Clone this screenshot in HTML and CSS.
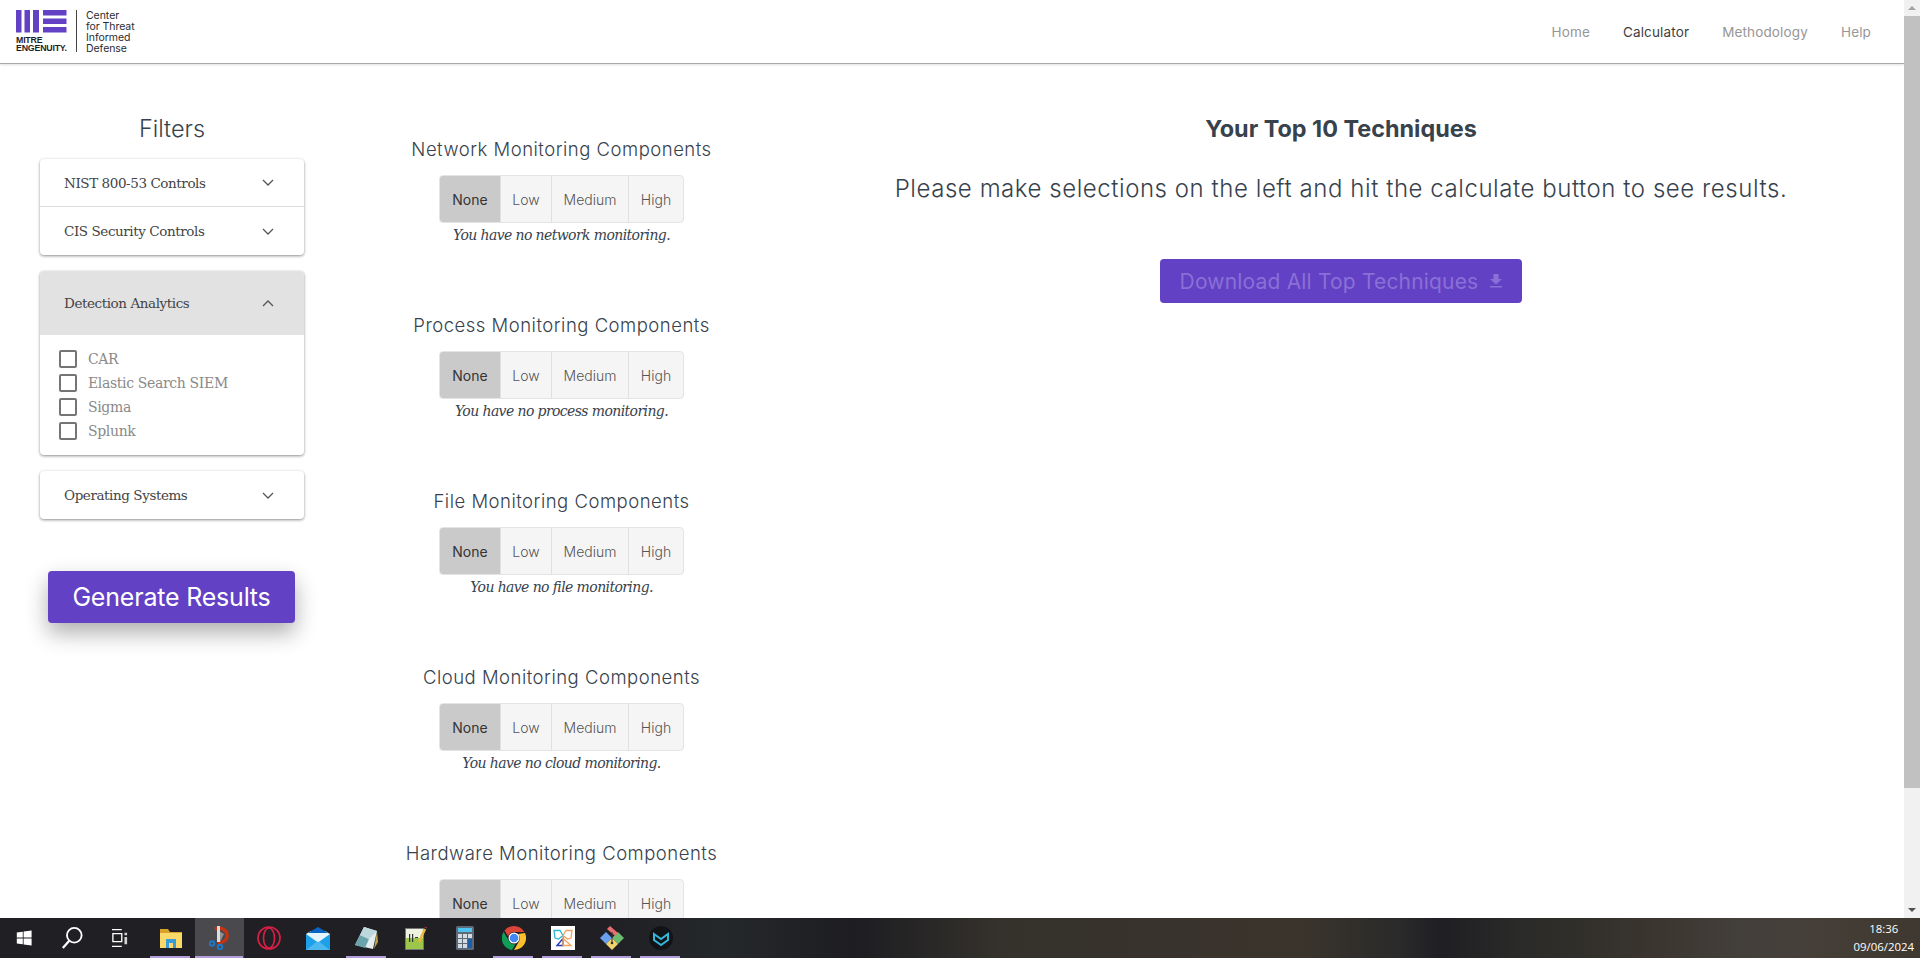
FILE: index.html
```html
<!DOCTYPE html>
<html lang="en">
<head>
<meta charset="utf-8">
<title>Top ATT&amp;CK Techniques</title>
<link rel="stylesheet" href="styles.css">
</head>
<body>
<div class="screen">
  <div class="browser">
    <div class="page">
      <header class="topbar">
        <div class="brand">
          <div class="brand-mark">
            <svg class="brand-bars" width="24" height="23" viewBox="0 0 24 23"><path fill="#6341c4" d="M0 0h5.500v22.500H0zM8.500 0h5.500v22.500H8.500zM17 0h6v22.500h-6z"/></svg>
            <svg class="brand-bars" width="24" height="23" viewBox="0 0 24 23"><path fill="#6341c4" d="M0 0h23.500v5.500H0zM0 8.500h23.500V14H0zM0 17h23.500v5.500H0z"/></svg>
            <div class="brand-name">MITRE<br>ENGENUITY.</div>
          </div>
          <div class="brand-title">Center<br>for Threat<br>Informed<br>Defense</div>
        </div>
        <nav class="nav">
          <a class="nav-link">Home</a>
          <a class="nav-link nav-active">Calculator</a>
          <a class="nav-link">Methodology</a>
          <a class="nav-link">Help</a>
        </nav>
      </header>
      <main class="content">
        <section class="filters">
          <h2 class="filters-title">Filters</h2>
          <div class="card">
            <div class="acc-row acc-divider"><span>NIST 800-53 Controls</span><svg class="chev" viewBox="0 0 12 7"><path d="M1 1l5 5 5-5"/></svg></div>
            <div class="acc-row"><span>CIS Security Controls</span><svg class="chev" viewBox="0 0 12 7"><path d="M1 1l5 5 5-5"/></svg></div>
          </div>
          <div class="card">
            <div class="acc-row acc-open"><span>Detection Analytics</span><svg class="chev" viewBox="0 0 12 7"><path d="M1 6l5-5 5 5"/></svg></div>
            <div class="acc-body">
              <label class="check"><i class="box"></i>CAR</label>
              <label class="check"><i class="box"></i>Elastic Search SIEM</label>
              <label class="check"><i class="box"></i>Sigma</label>
              <label class="check"><i class="box"></i>Splunk</label>
            </div>
          </div>
          <div class="card">
            <div class="acc-row"><span>Operating Systems</span><svg class="chev" viewBox="0 0 12 7"><path d="M1 1l5 5 5-5"/></svg></div>
          </div>
          <button class="generate">Generate Results</button>
        </section>
        <section class="monitors">
          <div class="monitor">
            <h3 class="monitor-title">Network Monitoring Components</h3>
            <div class="levels"><span class="level level-on">None</span><span class="level">Low</span><span class="level">Medium</span><span class="level">High</span></div>
            <p class="monitor-note">You have no network monitoring.</p>
          </div>
          <div class="monitor">
            <h3 class="monitor-title">Process Monitoring Components</h3>
            <div class="levels"><span class="level level-on">None</span><span class="level">Low</span><span class="level">Medium</span><span class="level">High</span></div>
            <p class="monitor-note">You have no process monitoring.</p>
          </div>
          <div class="monitor">
            <h3 class="monitor-title">File Monitoring Components</h3>
            <div class="levels"><span class="level level-on">None</span><span class="level">Low</span><span class="level">Medium</span><span class="level">High</span></div>
            <p class="monitor-note">You have no file monitoring.</p>
          </div>
          <div class="monitor">
            <h3 class="monitor-title">Cloud Monitoring Components</h3>
            <div class="levels"><span class="level level-on">None</span><span class="level">Low</span><span class="level">Medium</span><span class="level">High</span></div>
            <p class="monitor-note">You have no cloud monitoring.</p>
          </div>
          <div class="monitor">
            <h3 class="monitor-title">Hardware Monitoring Components</h3>
            <div class="levels"><span class="level level-on">None</span><span class="level">Low</span><span class="level">Medium</span><span class="level">High</span></div>
          </div>
        </section>
        <section class="results">
          <h2 class="results-title">Your Top 10 Techniques</h2>
          <p class="results-msg">Please make selections on the left and hit the calculate button to see results.</p>
          <button class="download">Download All Top Techniques
            <svg class="download-icon" width="12" height="14" viewBox="0 0 12 14"><path d="M3.500 0h5v5H12L6 10.500 0 5h3.500zM0 12h12v1.500H0z"/></svg>
          </button>
        </section>
      </main>
    </div>
    <div class="scrollbar">
      <div class="scroll-btn"><i class="tri-up"></i></div>
      <div class="scroll-track"><div class="scroll-thumb"></div></div>
      <div class="scroll-btn"><i class="tri-down"></i></div>
    </div>
  </div>
  <footer class="taskbar">
    <div class="task-item task-sys">
      <svg width="16" height="16" viewBox="0 0 20 20"><path fill="#fff" d="M1 3.200l7.500-1v7.300H1zM9.500 2l10-1.500v9h-10zM1 10.500h7.500v7.300l-7.500-1zM9.500 10.500h10v9l-10-1.500z"/></svg>
    </div>
    <div class="task-item task-sys">
      <svg width="22" height="24" viewBox="0 0 24 26"><circle cx="14.500" cy="10" r="8" fill="none" stroke="#fff" stroke-width="2"/><path d="M9 16L2 24" stroke="#fff" stroke-width="2.500" fill="none"/></svg>
    </div>
    <div class="task-item task-sys">
      <svg width="16" height="20" viewBox="0 0 18 22"><path d="M0 1.500h11M0 20.500h11M1 6h10v9H1z" stroke="#fff" stroke-width="1.500" fill="none"/><path d="M14 5h3v3h-3zM14 10h3v8h-3z" fill="#fff" opacity=".8"/></svg>
    </div>
    <div class="task-item task-app task-first task-open">
      <svg width="22" height="19" viewBox="0 0 22 19"><path fill="#d9a22b" d="M0 0h8l2 3h12v6H0z"/><path fill="#fbd968" d="M0 4h22v15H0z"/><path fill="#3a9bd9" d="M6 10h10v9h-3v-5H9v5H6z"/></svg>
    </div>
    <div class="task-item task-app task-active">
      <svg class="snip-icon" width="20" height="24" viewBox="0 0 20 24"><path fill="none" stroke="#c8320f" stroke-width="3.200" d="M6 3c7-3 13 2 12 8-1 4-5 6-9 6"/><path fill="#8f8f92" d="M10 5l5 3-4 8z"/><path fill="#dcdde0" d="M8 0h3v16H8z"/><circle cx="3" cy="17.500" r="2.300" fill="none" stroke="#1d78c8" stroke-width="1.900"/><circle cx="11" cy="21" r="2.300" fill="none" stroke="#1d78c8" stroke-width="1.900"/></svg>
    </div>
    <div class="task-item task-app">
      <svg width="24" height="24" viewBox="0 0 24 24"><circle cx="12" cy="12" r="11" fill="none" stroke="#d61f45" stroke-width="1.700"/><ellipse cx="12" cy="12" rx="5.500" ry="10" fill="none" stroke="#d61f45" stroke-width="1.700"/></svg>
    </div>
    <div class="task-item task-app">
      <svg width="24" height="23" viewBox="0 0 24 23"><path fill="#1ca0ea" d="M0 7h24v16H0z"/><path fill="#e6f5fd" d="M0 7l12 8.500L24 7l-5-3H5z"/><path fill="#0a64c2" d="M12 0L2 6h20z"/><path fill="#4bb8f0" d="M0 23l11-8.500 1 .5 1-.5L24 23z"/></svg>
    </div>
    <div class="task-item task-app task-open">
      <svg width="23" height="22" viewBox="0 0 23 22"><path fill="#b9a04a" d="M22 4l1 11-4 7z"/><path fill="#e3ecee" d="M9 0l13 4-4 18L0 18z"/><path fill="#6ba3ad" d="M0 18L5 8l9 4-4 9z"/><path fill="#bcd8dd" d="M5 8l4-8 13 4-8 8z"/></svg>
    </div>
    <div class="task-item task-app">
      <svg width="22" height="24" viewBox="0 0 22 24"><path fill="#eef3e0" stroke="#777" d="M.5 2.500h18v21H.5z"/><path fill="#9dc74a" d="M1 12h17v11H1z"/><path fill="#333" d="M4 8h1.200v8H4zM7 8h1.200v8H7zM10 11h3v1h-3z"/><path stroke="#e8b93a" stroke-width="2.500" d="M20 3l-6 13" fill="none"/><path stroke="#b03030" stroke-width="2.500" d="M20.500 2l.5-1" fill="none"/></svg>
    </div>
    <div class="task-item task-app">
      <svg width="18" height="24" viewBox="0 0 18 24"><rect width="18" height="24" rx="1.500" fill="#5d6a78"/><path fill="#4fc3f0" d="M2 2h14v4H2z"/><path fill="#d5dbe0" d="M2 8h4v4H2zM7 8h4v4H7zM12 8h4v4h-4zM2 13h4v4H2zM7 13h4v4H7zM2 18h4v4H2zM7 18h4v4H7z"/><path fill="#1a5fa8" d="M12 13h4v9h-4z"/></svg>
    </div>
    <div class="task-item task-app task-open">
      <svg width="24" height="24" viewBox="0 0 24 24"><path fill="#db4437" d="M12 0a12 12 0 0 1 10.400 6H12a6 6 0 0 0-5.800 4.500L2.500 4.500A12 12 0 0 1 12 0z"/><path fill="#0f9d58" d="M1.600 5.800l5.200 9A6 6 0 0 0 13.500 18L10 24A12 12 0 0 1 1.600 5.800z"/><path fill="#fbc02d" d="M23 7a12 12 0 0 1-11 17l5.200-9A6 6 0 0 0 16 8z"/><circle cx="12" cy="12" r="5.500" fill="#fff"/><circle cx="12" cy="12" r="4.300" fill="#4285f4"/></svg>
    </div>
    <div class="task-item task-app task-open">
      <svg width="24" height="24" viewBox="0 0 24 24"><path fill="#fff" d="M0 0h24v24H0z"/><path fill="none" stroke="#2ab7d6" stroke-width="1.300" d="M3 4.500h6l3 5-4.500 3.500L4 12z"/><path fill="none" stroke="#f5a25d" stroke-width="1.300" d="M21 4.500h-6l-3 5 4.500 3.500L20 12z"/><path fill="none" stroke="#2035c9" stroke-width="1.300" d="M6 19.500l6-7v7z"/><path fill="none" stroke="#f5a25d" stroke-width="1.300" d="M20 19.500l-8-7v7z"/></svg>
    </div>
    <div class="task-item task-app task-open">
      <svg width="24" height="24" viewBox="0 0 24 24"><path fill="#6aa1ee" d="M0 12l6-6 6 6-6 6z"/><path fill="#6dbb6e" d="M12 12l6-6 6 6-6 6z"/><path fill="#f3d36f" d="M6 18l6-6 6 6-6 6z"/><path fill="#e96e70" d="M7 3l3-3 8 7-3 3z"/><path stroke="#333" d="M12 6v10" fill="none"/><circle cx="12" cy="17" r="1.300" fill="#333"/></svg>
    </div>
    <div class="task-item task-app task-open">
      <svg width="24" height="24" viewBox="0 0 24 24"><circle cx="12" cy="12" r="12" fill="#121316"/><path fill="none" stroke="#35b5d8" stroke-width="2" d="M5 8l7 5 7-5v6l-7 5-7-5z"/></svg>
    </div>
    <div class="clock"><span>18:36</span><span>09/06/2024</span></div>
  </footer>
</div>
</body>
</html>
```
FILE: styles.css
```css
* { box-sizing: border-box; }
html, body { margin: 0; height: 100%; overflow: hidden; }
body { font-family: Inter, "Liberation Sans", sans-serif; color: #37424d; background: #fff; }
h2, h3, p { margin: 0; font-weight: 400; }

.screen { height: 100vh; display: flex; flex-direction: column; }
.browser { flex: 1; min-height: 0; display: flex; }
.page { flex: 1; min-width: 0; overflow: hidden; display: flex; flex-direction: column; }

.topbar { flex: none; height: 64px; display: flex; justify-content: space-between; align-items: center; padding: 0 33px 0 16px; border-bottom: 1px solid #a9a9a9; box-shadow: 0 1px 2px rgba(0,0,0,.12); }
.brand { display: flex; align-items: stretch; height: 42px; margin-top: -1px; }
.brand-mark { width: 51px; display: flex; flex-wrap: wrap; gap: 0 3px; align-content: flex-start; }
.brand-bars { flex: none; display: block; }
.brand-name { width: 56px; margin-top: 4px; font: 700 8.800px/7.500px "Liberation Sans", sans-serif; color: #1f1f28; letter-spacing: -.2px; white-space: nowrap; }
.brand-title { margin-left: 9px; padding-left: 9px; border-left: 1px solid #444; font: 400 10.500px/11px Inter, sans-serif; color: #2b2b33; letter-spacing: -.05px; }
.nav { display: flex; gap: 33px; }
.nav-link { font-size: 13.500px; color: #969696; letter-spacing: .15px; }
.nav-active { color: #3f3f3f; }

.content { flex: 1; min-height: 0; display: grid; grid-template-columns: 344px 435px 1fr; padding-right: 1px; }

.filters { padding: 50px 40px 0; display: flex; flex-direction: column; }
.filters-title { font-size: 23.500px; font-weight: 300; line-height: 30px; text-align: center; margin-bottom: 15px; color: #37424d; }
.card { background: #fff; border-radius: 4px; box-shadow: 0 1px 3px rgba(0,0,0,.45); margin-bottom: 16px; overflow: hidden; }
.acc-row { height: 48px; display: flex; justify-content: space-between; align-items: center; padding: 0 30px 0 24px; font: 400 13.500px "DejaVu Serif", serif; letter-spacing: -.42px; color: #444; }
.acc-divider { border-bottom: 1px solid #dcdcdc; }
.acc-open { height: 64px; background: #e2e2e2; }
.chev { width: 12px; height: 7px; fill: none; stroke: #555; stroke-width: 1.300; flex: none; }
.acc-body { padding: 12px 0 12px 19px; height: 120px; }
.check { display: flex; align-items: center; height: 24px; font: 400 14px "DejaVu Serif", serif; letter-spacing: -.35px; color: #8a8a8a; }
.box { width: 18px; height: 18px; border: 2px solid #757575; border-radius: 2px; margin-right: 11px; flex: none; }
.generate { align-self: center; margin: 36px 1px 0 0; width: 247px; height: 52px; border: 0; border-radius: 4px; background: #6341c4; color: #fff; font: 400 25px Inter, sans-serif; box-shadow: 0 10px 22px rgba(0,0,0,.32); padding: 0; letter-spacing: -.2px; }

.monitors { display: flex; flex-direction: column; align-items: center; padding-top: 74px; }
.monitor { height: 176px; display: flex; flex-direction: column; align-items: center; flex: none; }
.monitor-title { font-size: 18.500px; font-weight: 300; line-height: 22px; letter-spacing: .5px; margin-bottom: 15px; white-space: nowrap; }
.levels { display: flex; height: 48px; border: 1px solid #e4e4e4; border-radius: 4px; overflow: hidden; background: #f5f5f5; }
.level { display: flex; align-items: center; justify-content: center; font-size: 14px; font-weight: 300; color: #555; border-left: 1px solid #e0e0e0; }
.level:nth-child(1) { width: 60px; border-left: 0; }
.level:nth-child(2) { width: 51px; }
.level:nth-child(3) { width: 77px; }
.level:nth-child(4) { width: 55px; }
.level-on { background: #cacaca; color: #333; font-weight: 400; }
.monitor-note { margin-top: 2px; font: italic 400 14px/20px "DejaVu Serif", serif; letter-spacing: -.6px; color: #37424d; }

.results { display: flex; flex-direction: column; align-items: center; padding-top: 50px; }
.results-title { font-size: 23.400px; font-weight: 700; line-height: 30px; color: #37424d; }
.results-msg { font-size: 24px; font-weight: 300; line-height: 30px; margin-top: 30px; letter-spacing: .55px; white-space: nowrap; }
.download { margin-top: 55px; width: 362px; height: 44px; border: 0; border-radius: 4px; background: #6341c4; color: #8a70d6; font: 400 21px Inter, sans-serif; letter-spacing: .18px; display: flex; align-items: center; justify-content: center; gap: 12px; padding: 0; }
.download-icon { fill: #8a70d6; }

.scrollbar { flex: none; width: 16px; display: flex; flex-direction: column; background: #f1f1f1; }
.scroll-btn { flex: none; height: 16px; display: flex; align-items: center; justify-content: center; }
.scroll-track { flex: 1; }
.scroll-thumb { height: 772px; background: #c1c1c1; }
.tri-up { border: 4px solid transparent; border-top: 0; border-bottom: 4px solid #a3a3a3; }
.tri-down { border: 4px solid transparent; border-bottom: 0; border-top: 4px solid #505050; }

.taskbar { flex: none; height: 40px; display: flex; align-items: stretch; background: linear-gradient(90deg, #1f1f24 0, #1f1f24 600px, #25282a 720px, #1d1d22 855px, #35322c 1000px, #3a342c 1300px, #2a2a2a 1400px, #1f1f24 1440px, #2a2a28 1520px, #3a352e 1650px, #433f3a 1740px, #46403a 1800px, #3e3830 1920px); }
.task-item { position: relative; display: flex; align-items: center; justify-content: center; flex: none; }
.task-sys { width: 48px; }
.task-app { width: 49px; }
.task-first { margin-left: 2px; }
.task-open::after { content: ""; position: absolute; left: 4px; right: 5px; bottom: 0; height: 2px; background: #b39ddb; }
.task-active { background: #4a4a4e; }
.task-active::after { content: ""; position: absolute; left: 0; right: 1px; bottom: 0; height: 2px; background: #b39ddb; }
.snip-icon { margin-right: 2px; }
.clock { margin-left: auto; padding-right: 6px; display: flex; flex-direction: column; align-items: center; justify-content: center; font: 400 11.400px/18px "Open Sans", sans-serif; color: #fff; }
```
